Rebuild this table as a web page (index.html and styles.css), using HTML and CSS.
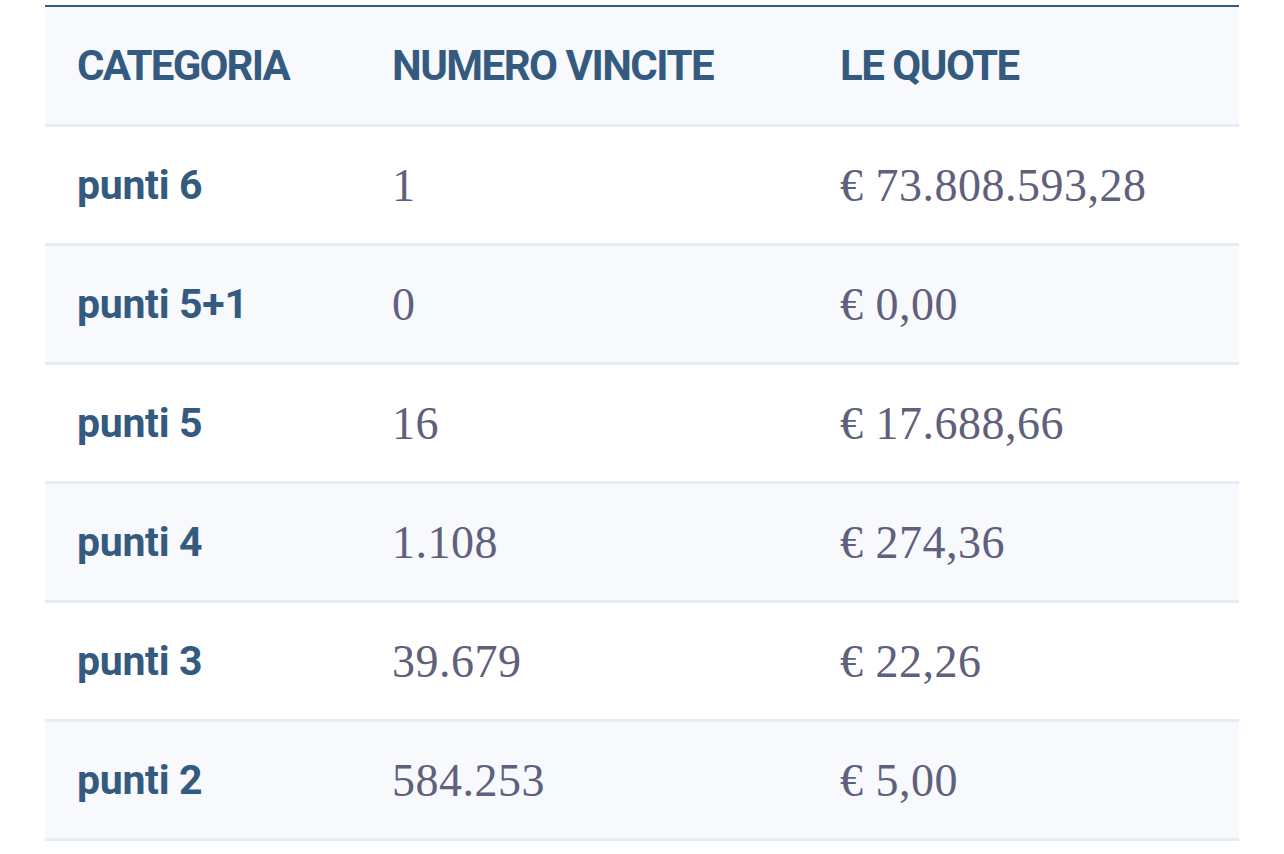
FILE: index.html
```html
<!DOCTYPE html>
<html lang="it">
<head>
<meta charset="utf-8">
<title>Quote</title>
<link rel="stylesheet" href="styles.css">
</head>
<body>
<div class="wrap">
  <table class="quote-table">
    <colgroup>
      <col class="c1">
      <col class="c2">
      <col class="c3">
    </colgroup>
    <thead>
      <tr>
        <th>CATEGORIA</th>
        <th>NUMERO VINCITE</th>
        <th>LE QUOTE</th>
      </tr>
    </thead>
    <tbody>
      <tr><td class="cat">punti 6</td><td class="num">1</td><td class="num">€ 73.808.593,28</td></tr>
      <tr><td class="cat">punti 5+1</td><td class="num">0</td><td class="num">€ 0,00</td></tr>
      <tr><td class="cat">punti 5</td><td class="num">16</td><td class="num">€ 17.688,66</td></tr>
      <tr><td class="cat">punti 4</td><td class="num">1.108</td><td class="num">€ 274,36</td></tr>
      <tr><td class="cat">punti 3</td><td class="num">39.679</td><td class="num">€ 22,26</td></tr>
      <tr><td class="cat">punti 2</td><td class="num">584.253</td><td class="num">€ 5,00</td></tr>
    </tbody>
  </table>
</div>
</body>
</html>
```
FILE: styles.css
```css
html, body {
  margin: 0;
  padding: 0;
  background: #ffffff;
}

.wrap {
  padding: 5px 45px 0 45px;
}

.quote-table {
  width: 1194px;
  border-collapse: collapse;
  table-layout: fixed;
  border-top: 2px solid #365b81;
}

.c1 { width: 315px; }
.c2 { width: 448px; }
.c3 { width: 431px; }

.quote-table th,
.quote-table td {
  padding: 0 0 0 32px;
  text-align: left;
  vertical-align: middle;
  border-bottom: 3px solid #e4ecf4;
}

.quote-table th {
  height: 117px;
  background: #f7f9fd;
  font-family: "Roboto", "Liberation Sans", sans-serif;
  font-weight: 700;
  font-size: 42px;
  color: #355a80;
  letter-spacing: -1.8px;
}

.quote-table th:nth-child(2),
.quote-table th:nth-child(3) {
  letter-spacing: -1.5px;
}

.quote-table td {
  height: 116px;
}

.quote-table tbody tr:nth-child(even) td {
  background: #f7f9fd;
}

.cat {
  font-family: "Roboto", "Liberation Sans", sans-serif;
  font-weight: 700;
  font-size: 41px;
  color: #355a80;
  letter-spacing: -0.3px;
}

.num {
  font-family: "Liberation Serif", "DejaVu Serif", serif;
  font-size: 46px;
  letter-spacing: 0.5px;
  color: #5f607c;
}
```
